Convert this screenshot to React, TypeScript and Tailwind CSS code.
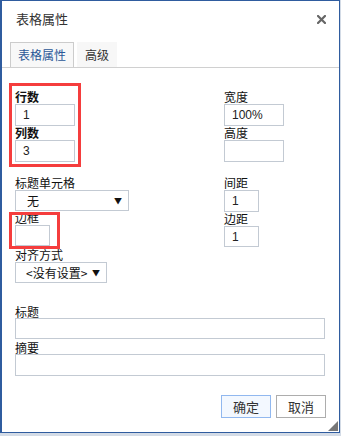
import React from "react";

const font = { fontFamily: '"Noto Sans CJK SC", "Noto Sans", sans-serif' };

function Label({ children, bold, h = "h-[14px]" }: { children: React.ReactNode; bold?: boolean; h?: string }) {
  return (
    <div className={`${h} text-[12px] leading-[14px] text-[#111] whitespace-nowrap ${bold ? "font-bold" : ""}`}>
      {children}
    </div>
  );
}

function Input({ w, h, value }: { w: string; h: string; value?: string }) {
  return (
    <div
      className={`${w} ${h} border border-[#c3cad3] bg-white flex items-center pl-[7px] text-[12px] text-[#222]`}
      style={{ fontFamily: '"Liberation Sans", Arial, sans-serif' }}
    >
      {value}
    </div>
  );
}

function Select({ w, value, padL }: { w: string; value: string; padL: string }) {
  return (
    <div className={`${w} h-[21px] border border-[#c3cad3] bg-white flex items-center justify-between ${padL} pr-[6px] text-[12px] text-[#111]`}>
      <span>{value}</span>
      <span className="text-[8px] leading-none text-[#111]">▼</span>
    </div>
  );
}

export default function App() {
  return (
    <div className="w-[341px] h-[436px] bg-[#d3dbe6]" style={font}>
      <div className="relative w-[340px] h-[433px] bg-white border border-[#2f5c9f] border-l-2 flex flex-col">
        {/* title */}
        <div className="h-[41px] flex justify-between items-start pl-[14px] pr-[13px] pt-[10px]">
          <div className="text-[13px] leading-[16px] text-[#333]">表格属性</div>
          <svg width="9" height="9" viewBox="0 0 9 9" className="mt-[4px]">
            <path d="M1 1 L8 8 M8 1 L1 8" stroke="#666" strokeWidth="2.2" strokeLinecap="square" />
          </svg>
        </div>
        {/* tabs */}
        <div className="h-[26px] border-b border-[#d0d0d0] flex items-end gap-[3px] pl-[8px]">
          <div className="w-[64px] h-[25px] border border-b-0 border-[#cccccc] bg-[#f8f8f8] flex items-center justify-center text-[12px] text-[#2b5797]">
            表格属性
          </div>
          <div className="w-[40px] h-[25px] bg-[#f7f7f7] flex items-center justify-center text-[12px] text-[#333]">
            高级
          </div>
        </div>
        {/* content */}
        <div className="flex flex-col pl-[13px] pt-[22px]">
          <div className="flex">
            <div className="w-[209px] flex flex-col">
              <Label bold>行数</Label>
              <Input w="w-[60px]" h="h-[22px]" value="1" />
              <Label bold>列数</Label>
              <Input w="w-[60px]" h="h-[22px]" value="3" />
            </div>
            <div className="flex flex-col">
              <Label>宽度</Label>
              <Input w="w-[60px]" h="h-[22px]" value="100%" />
              <Label>高度</Label>
              <Input w="w-[60px]" h="h-[22px]" />
            </div>
          </div>
          <div className="flex mt-[14px]">
            <div className="w-[209px] flex flex-col">
              <Label>标题单元格</Label>
              <Select w="w-[114px]" value="无" padL="pl-[11px]" />
              <Label>边框</Label>
              <Input w="w-[35px]" h="h-[21px]" />
              <div className="mt-[2px]">
                <Label>对齐方式</Label>
              </div>
              <Select w="w-[92px]" value="<没有设置>" padL="pl-[10px]" />
            </div>
            <div className="flex flex-col">
              <Label>间距</Label>
              <Input w="w-[35px]" h="h-[22px]" value="1" />
              <Label>边距</Label>
              <Input w="w-[35px]" h="h-[21px]" value="1" />
            </div>
          </div>
          <div className="flex flex-col mt-[22px]">
            <Label h="h-[13px]">标题</Label>
            <Input w="w-[310px]" h="h-[21px]" />
            <div className="mt-[2px]">
              <Label h="h-[13px]">摘要</Label>
            </div>
            <Input w="w-[310px]" h="h-[22px]" />
          </div>
        </div>
        {/* buttons */}
        <div className="flex justify-end gap-[5px] pr-[13px] mt-[19px]">
          <div className="w-[50px] h-[23px] border border-[#91b8ef] bg-[#f3f8ff] flex items-center justify-center text-[13px] text-[#333]">
            确定
          </div>
          <div className="w-[50px] h-[23px] border border-[#adadad] bg-white flex items-center justify-center text-[13px] text-[#333]">
            取消
          </div>
        </div>
        {/* resize grip */}
        <svg width="10" height="10" viewBox="0 0 10 10" className="absolute right-[1px] bottom-[1px]">
          <path d="M10 0 L10 10 L0 10 Z" fill="#777" />
        </svg>
        {/* red annotation boxes */}
        <div className="absolute left-[7px] top-[82px] w-[72px] h-[84px] border-[3px] border-[#f53d3d]" />
        <div className="absolute left-[7px] top-[211px] w-[51px] h-[37px] border-[3px] border-[#f53d3d]" />
      </div>
    </div>
  );
}
